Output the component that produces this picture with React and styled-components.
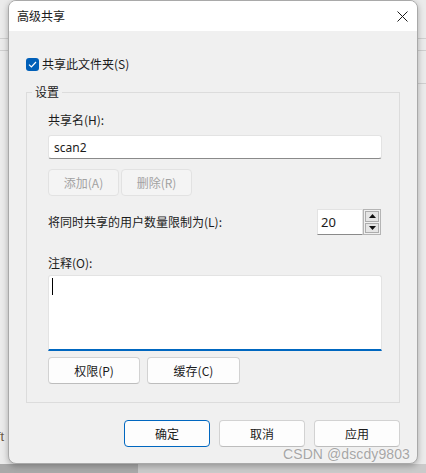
import React from "react";
import styled, { createGlobalStyle } from "styled-components";

const GlobalStyle = createGlobalStyle`
  html, body { margin: 0; padding: 0; }
  body {
    font-family: "Noto Sans CJK SC", "Noto Sans", sans-serif;
    font-size: 12px;
    color: #1b1b1b;
  }
  * { box-sizing: border-box; }
`;

const Desktop = styled.div`
  width: 426px;
  height: 473px;
  overflow: hidden;
  display: flex;
  flex-direction: column;
  background-color: #ebebeb;
  background-image:
    linear-gradient(#cfcfcf, #cfcfcf),
    linear-gradient(#cfcfcf, #cfcfcf),
    linear-gradient(#cfcfcf, #cfcfcf);
  background-repeat: no-repeat;
  background-size: 100% 1px, 100% 1px, 10px 1px;
  background-position: 0 38px, 0 50px, right 0 top 83px;
`;

const WindowRow = styled.div`
  display: flex;
  height: 464px;
`;

const SideStrip = styled.div`
  width: ${(p) => p.$width}px;
  flex: none;
  display: flex;
  flex-direction: column;
  justify-content: flex-end;
  overflow: hidden;
  padding-bottom: 20px;
`;

const PeekText = styled.span`
  font-family: "Liberation Sans", sans-serif;
  font-size: 13px;
  color: #6b5a44;
  margin-left: -3px;
`;

const TaskStrip = styled.div`
  flex: 1;
  display: flex;
  background: #cacaca;
`;

const TaskItem = styled.div`
  width: 138px;
  background: #a9a9a9;
`;

const Dialog = styled.div`
  position: relative;
  width: 410px;
  height: 464px;
  flex: none;
  display: flex;
  flex-direction: column;
  border: 1px solid #a9a9a9;
  border-radius: 8px;
  overflow: hidden;
  background: #f0f0f0;
  box-shadow: 0 2px 6px rgba(0, 0, 0, 0.28);
`;

const TitleBar = styled.div`
  height: 30px;
  flex: none;
  display: flex;
  align-items: center;
  justify-content: space-between;
  background: #ffffff;
  padding-left: 8px;
`;

const Title = styled.span`
  font-size: 12px;
  line-height: 16px;
  color: #1b1b1b;
`;

const CloseButton = styled.button`
  width: 30px;
  height: 30px;
  border: none;
  background: transparent;
  display: flex;
  align-items: center;
  justify-content: center;
  padding: 0;
`;

const Body = styled.div`
  flex: 1;
  display: flex;
  flex-direction: column;
  padding: 0 17px;
`;

const CheckRow = styled.label`
  display: flex;
  align-items: center;
  gap: 3px;
  margin-top: 25px;
  line-height: 16px;
`;

const CheckBox = styled.span`
  width: 13px;
  height: 13px;
  border-radius: 3px;
  background: #005fb8;
  display: flex;
  align-items: center;
  justify-content: center;
`;

const GroupBox = styled.fieldset`
  margin: 12px 0 0;
  padding: 0;
  border: 1px solid #dcdcdc;
  min-width: 0;
`;

const Legend = styled.legend`
  margin-left: 5px;
  padding: 0 3px;
  line-height: 16px;
`;

const GroupInner = styled.div`
  display: flex;
  flex-direction: column;
  padding: 12px 17px 18px 21px;
`;

const FieldLabel = styled.div`
  line-height: 16px;
  margin-top: ${(p) => p.$top || 0}px;
`;

const TextField = styled.div`
  height: 24px;
  margin-top: 7px;
  background: #ffffff;
  border: 1px solid #e3e3e3;
  border-bottom-color: #8a8a8a;
  border-radius: 3px;
  padding: 0 5px;
  display: flex;
  align-items: center;
  font-family: "Noto Sans", "Noto Sans CJK SC", sans-serif;
  font-size: 12px;
`;

const ButtonRow = styled.div`
  display: flex;
  gap: ${(p) => p.$gap || 2}px;
  margin-top: ${(p) => p.$top || 0}px;
  justify-content: ${(p) => (p.$end ? "flex-end" : "flex-start")};
`;

const Button = styled.button`
  width: ${(p) => p.$width}px;
  height: 27px;
  font-family: inherit;
  font-size: 12px;
  line-height: 16px;
  padding: 0;
  border-radius: 4px;
  background: ${(p) => (p.disabled ? "#f4f4f4" : "#fdfdfd")};
  color: ${(p) => (p.disabled ? "#a2a2a2" : "#1b1b1b")};
  border: 1px solid ${(p) => (p.$primary ? "#0067c0" : p.disabled ? "#e2e2e2" : "#d2d2d2")};
  border-bottom-color: ${(p) => (p.$primary ? "#0067c0" : p.disabled ? "#e2e2e2" : "#bdbdbd")};
`;

const LimitRow = styled.div`
  display: flex;
  align-items: center;
  justify-content: space-between;
  margin-top: 13px;
  line-height: 16px;
`;

const Spinner = styled.div`
  display: flex;
  height: 26px;
  margin-right: 1px;
`;

const SpinInput = styled.div`
  width: 46px;
  background: #ffffff;
  border: 1px solid #e3e3e3;
  border-bottom-color: #8a8a8a;
  padding-left: 3px;
  display: flex;
  align-items: center;
  font-family: "Noto Sans", sans-serif;
  font-size: 13px;
`;

const SpinArrows = styled.div`
  width: 18px;
  display: flex;
  flex-direction: column;
  gap: 1px;
  border: 1px solid #b4b4b4;
  background: #f0f0f0;
  padding: 1px;
`;

const SpinArrow = styled.div`
  flex: 1;
  background: #e5e5e5;
  border: 1px solid #adadad;
  display: flex;
  align-items: center;
  justify-content: center;
`;

const NoteArea = styled.div`
  height: 76px;
  margin-top: 4px;
  background: #ffffff;
  border: 1px solid #e3e3e3;
  border-bottom: 2px solid #0067c0;
  border-radius: 3px 3px 0 0;
  padding: 2px 3px;
`;

const Caret = styled.div`
  width: 1px;
  height: 17px;
  background: #000000;
`;

const Watermark = styled.div`
  position: absolute;
  right: 7px;
  bottom: 0px;
  font-family: "Liberation Sans", "Noto Sans", sans-serif;
  font-size: 14px;
  line-height: 17px;
  color: #a6a6a6;
  text-shadow: 0 0 2px #ffffff;
  letter-spacing: 0.1px;
`;

const Triangle = ({ down }) => (
  <svg width="7" height="4" viewBox="0 0 7 4">
    <path d={down ? "M0 0H7L3.5 4Z" : "M0 4H7L3.5 0Z"} fill="#111" />
  </svg>
);

export default function App() {
  return (
    <>
      <GlobalStyle />
      <Desktop>
        <WindowRow>
          <SideStrip $width={8}>
            <PeekText>ft</PeekText>
          </SideStrip>
          <Dialog>
            <TitleBar>
              <Title>高级共享</Title>
              <CloseButton aria-label="关闭">
                <svg width="11" height="11" viewBox="0 0 11 11">
                  <path d="M0.5 0.5L10.5 10.5M10.5 0.5L0.5 10.5" stroke="#1b1b1b" strokeWidth="1" />
                </svg>
              </CloseButton>
            </TitleBar>
            <Body>
              <CheckRow>
                <CheckBox>
                  <svg width="9" height="7" viewBox="0 0 9 7">
                    <path d="M1 3.6L3.4 6L8 1" stroke="#fff" strokeWidth="1.2" fill="none" />
                  </svg>
                </CheckBox>
                共享此文件夹(S)
              </CheckRow>
              <GroupBox>
                <Legend>设置</Legend>
                <GroupInner>
                  <FieldLabel>共享名(H):</FieldLabel>
                  <TextField>scan2</TextField>
                  <ButtonRow $top={10}>
                    <Button $width={71} disabled>添加(A)</Button>
                    <Button $width={71} disabled>删除(R)</Button>
                  </ButtonRow>
                  <LimitRow>
                    <span>将同时共享的用户数量限制为(L):</span>
                    <Spinner>
                      <SpinInput>20</SpinInput>
                      <SpinArrows>
                        <SpinArrow><Triangle /></SpinArrow>
                        <SpinArrow><Triangle down /></SpinArrow>
                      </SpinArrows>
                    </Spinner>
                  </LimitRow>
                  <FieldLabel $top={20}>注释(O):</FieldLabel>
                  <NoteArea>
                    <Caret />
                  </NoteArea>
                  <ButtonRow $top={6} $gap={7}>
                    <Button $width={92}>权限(P)</Button>
                    <Button $width={93}>缓存(C)</Button>
                  </ButtonRow>
                </GroupInner>
              </GroupBox>
              <ButtonRow $top={17} $gap={9} $end>
                <Button $width={86} $primary>确定</Button>
                <Button $width={86}>取消</Button>
                <Button $width={86}>应用</Button>
              </ButtonRow>
            </Body>
            <Watermark>CSDN @dscdy9803</Watermark>
          </Dialog>
          <SideStrip $width={8} />
        </WindowRow>
        <TaskStrip>
          <TaskItem />
        </TaskStrip>
      </Desktop>
    </>
  );
}
